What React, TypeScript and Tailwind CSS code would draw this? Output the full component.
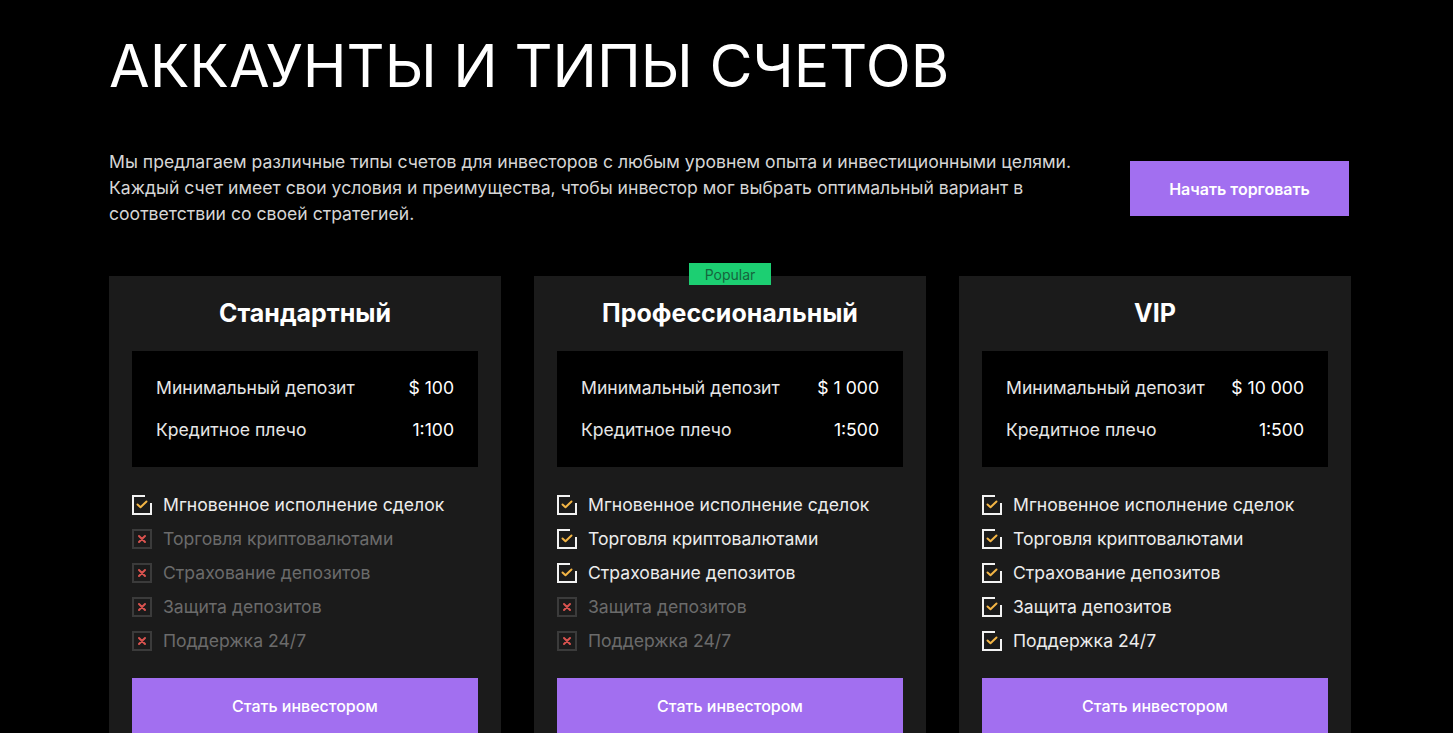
import { Fragment } from "react";

type Plan = {
  name: string;
  deposit: string;
  leverage: string;
  popular?: boolean;
  enabled: number;
};

const FEATURES = [
  "Мгновенное исполнение сделок",
  "Торговля криптовалютами",
  "Страхование депозитов",
  "Защита депозитов",
  "Поддержка 24/7",
];

const PLANS: Plan[] = [
  { name: "Стандартный", deposit: "$ 100", leverage: "1:100", enabled: 1 },
  { name: "Профессиональный", deposit: "$ 1 000", leverage: "1:500", popular: true, enabled: 3 },
  { name: "VIP", deposit: "$ 10 000", leverage: "1:500", enabled: 5 },
];

function CheckIcon() {
  return (
    <svg aria-hidden="true" className="h-5 w-5 shrink-0" fill="none" viewBox="0 0 20 20">
      <path d="M13 1H1v18h18V8" stroke="#f2f2f2" strokeWidth="2" />
      <path d="M5.5 9.5l3 2.8L14.5 6.5" stroke="#f3b545" strokeLinecap="round" strokeLinejoin="round" strokeWidth="2" />
    </svg>
  );
}

function CrossIcon() {
  return (
    <svg aria-hidden="true" className="h-5 w-5 shrink-0" fill="none" viewBox="0 0 20 20">
      <rect height="18" stroke="#3b3b3b" strokeWidth="2" width="18" x="1" y="1" />
      <path d="M7 7l6 6M13 7l-6 6" stroke="#d9534f" strokeLinecap="round" strokeWidth="2" />
    </svg>
  );
}

function PlanCard({ plan }: { plan: Plan }) {
  return (
    <div className="relative flex w-[392px] flex-col bg-[#1b1b1b] px-[23px] pt-[21px]">
      {plan.popular ? (
        <span className="absolute top-[-13px] left-1/2 flex h-[22px] w-[82px] -translate-x-1/2 items-center justify-center bg-[#1ccf72] text-[14px] text-[#16653d]">
          Popular
        </span>
      ) : null}
      <h2 className="text-center text-[25px] leading-8 font-bold text-white">{plan.name}</h2>
      <div className="mt-[22px] flex flex-col gap-4 bg-black px-6 py-6 text-[17.6px] leading-[26px] text-[#e6e6e6]">
        <div className="flex justify-between">
          <span>Минимальный депозит</span>
          <span className="text-white">{plan.deposit}</span>
        </div>
        <div className="flex justify-between">
          <span>Кредитное плечо</span>
          <span className="text-white">{plan.leverage}</span>
        </div>
      </div>
      <ul className="mt-[21px] flex flex-col">
        {FEATURES.map((feature, index) => {
          const on = index < plan.enabled;
          return (
            <li
              key={feature}
              className={`flex h-[34px] items-center gap-[11px] text-[17.6px] ${on ? "text-[#ececec]" : "text-[#6b6b6b]"}`}
            >
              {on ? <CheckIcon /> : <CrossIcon />}
              <span>{feature}</span>
            </li>
          );
        })}
      </ul>
      <button
        className="mt-[20px] flex h-14 w-full items-center justify-center bg-[#a26ff0] text-[16px] font-medium text-white"
        type="button"
      >
        Стать инвестором
      </button>
    </div>
  );
}

export default function App() {
  return (
    <div className="min-h-[733px] overflow-hidden bg-black pl-[109px] font-['Inter','Noto_Sans',sans-serif]">
      <h1 className="pt-[34px] text-[59px] leading-[64px] font-normal text-white">
        АККАУНТЫ И ТИПЫ СЧЕТОВ
      </h1>
      <div className="mt-[51px] flex w-[1240px] items-start justify-between">
        <p className="w-[1000px] text-[17.6px] leading-[26px] text-[#d6d6d6]">
          {[
            "Мы предлагаем различные типы счетов для инвесторов с любым уровнем опыта и инвестиционными целями.",
            "Каждый счет имеет свои условия и преимущества, чтобы инвестор мог выбрать оптимальный вариант в",
            "соответствии со своей стратегией.",
          ].map((line, i) => (
            <Fragment key={i}>
              {line}
              <br />
            </Fragment>
          ))}
        </p>
        <button
          className="mt-[12px] h-[55px] w-[219px] bg-[#a26ff0] text-[16px] font-semibold text-white"
          type="button"
        >
          Начать торговать
        </button>
      </div>
      <div className="mt-[49px] flex gap-[33px]">
        {PLANS.map((plan) => (
          <PlanCard key={plan.name} plan={plan} />
        ))}
      </div>
    </div>
  );
}
